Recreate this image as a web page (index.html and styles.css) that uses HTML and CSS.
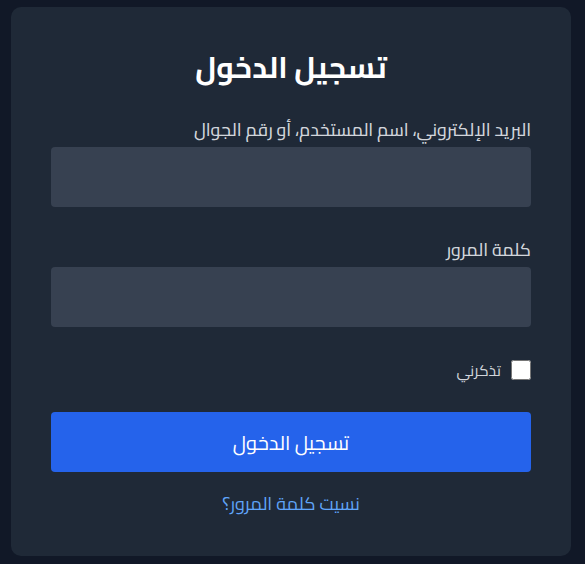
FILE: index.html
```html
<!DOCTYPE html>
<html lang="ar" dir="rtl">
<head>
<meta charset="utf-8">
<title>تسجيل الدخول</title>
<link rel="stylesheet" href="styles.css">
</head>
<body>
<main class="card">
  <h1 class="title">تسجيل الدخول</h1>
  <form class="form">
    <div class="field">
      <label class="label" for="login">البريد الإلكتروني، اسم المستخدم، أو رقم الجوال</label>
      <input class="input" id="login" type="text">
    </div>
    <div class="field">
      <label class="label" for="pass">كلمة المرور</label>
      <input class="input" id="pass" type="password">
    </div>
    <label class="remember">
      <input class="check" type="checkbox">
      <span>تذكرني</span>
    </label>
    <button class="submit" type="button">تسجيل الدخول</button>
    <a class="forgot" href="#">نسيت كلمة المرور؟</a>
  </form>
</main>
</body>
</html>
```
FILE: styles.css
```css
html, body {
  margin: 0;
  background: #111827;
}
body {
  padding: 7px 14px 0 11px;
  font-family: "Cairo", "Noto Sans", sans-serif;
}
.card {
  background: #1f2937;
  border-radius: 10px;
  box-sizing: border-box;
  padding: 40px;
}
.title {
  margin: 0;
  text-align: center;
  color: #ffffff;
  font-size: 30px;
  font-weight: 700;
  line-height: 40px;
}
.form {
  display: flex;
  flex-direction: column;
  margin-top: 33px;
}
.field {
  display: flex;
  flex-direction: column;
  gap: 7px;
  margin-bottom: 33px;
}
.label {
  color: #d1d5db;
  font-size: 17.7px;
  line-height: 20px;
  font-weight: 500;
}
.input {
  height: 60px;
  border: 0;
  border-radius: 4px;
  background: #374151;
  color: #fff;
  box-sizing: border-box;
  padding: 0 12px;
  outline: none;
  margin: 0;
}
.remember {
  display: flex;
  align-items: center;
  gap: 10px;
  color: #d1d5db;
  font-size: 15.5px;
  height: 20px;
}
.check {
  margin: 0;
  width: 20px;
  height: 20px;
}
.submit {
  margin-top: 32px;
  height: 60px;
  border: 0;
  border-radius: 4px;
  background: #2563eb;
  color: #ffffff;
  font-family: inherit;
  font-size: 20px;
}
.forgot {
  margin-top: 20px;
  text-align: center;
  color: #60a5fa;
  font-size: 18px;
  text-decoration: none;
  line-height: 24px;
}
```
